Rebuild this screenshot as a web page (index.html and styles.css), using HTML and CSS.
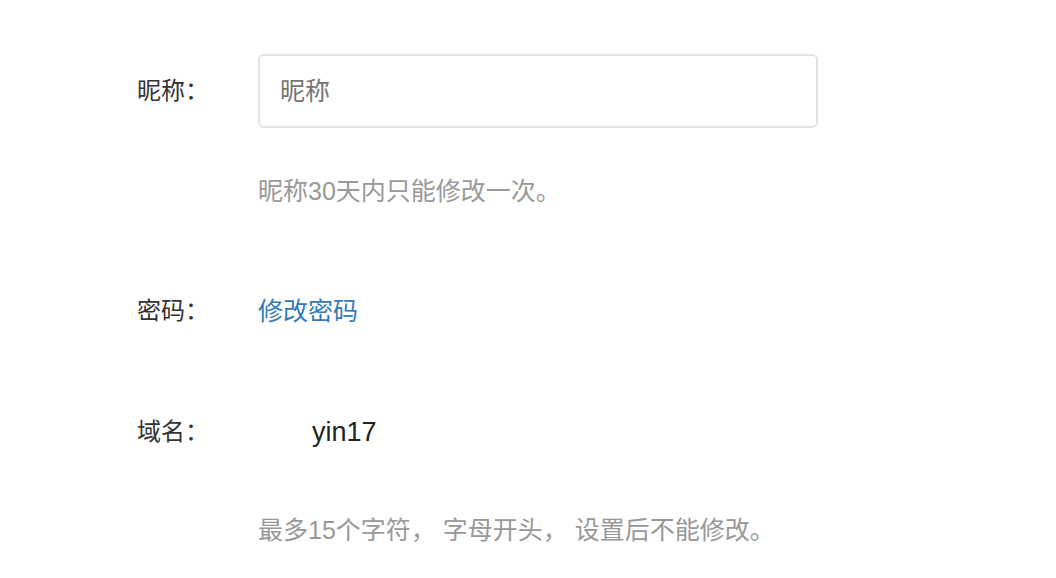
FILE: index.html
```html
<!DOCTYPE html>
<html lang="zh-CN">
<head>
<meta charset="utf-8">
<title>账号设置</title>
<link rel="stylesheet" href="styles.css">
</head>
<body>
<form class="settings">
  <div class="row row-input">
    <label class="label" for="nick">昵称：</label>
    <div class="field">
      <input id="nick" class="text-input" type="text" placeholder="昵称">
    </div>
  </div>
  <p class="help help-first">昵称30天内只能修改一次。</p>

  <div class="row row-pass">
    <span class="label">密码：</span>
    <div class="field"><a class="link" href="#">修改密码</a></div>
  </div>

  <div class="row row-domain">
    <span class="label">域名：</span>
    <div class="field"><span class="domain">yin17</span></div>
  </div>
  <p class="help help-last">最多15个字符， 字母开头， 设置后不能修改。</p>
</form>
</body>
</html>
```

FILE: styles.css
```css
html, body {
  margin: 0;
  padding: 0;
  background: #ffffff;
}

body {
  font-family: "Liberation Sans", "Noto Sans CJK SC", sans-serif;
  font-size: 25px;
  color: #333333;
}

.settings {
  padding: 54px 0 0 137px;
  width: 681px;
}

.row {
  display: flex;
  align-items: center;
  line-height: 36px;
}

.label {
  width: 121px;
  flex: none;
  font-size: 24px;
  color: #333333;
}

.field {
  flex: 1;
}

.text-input {
  box-sizing: border-box;
  width: 560px;
  height: 74px;
  border: 2px solid #e3e3e3;
  border-radius: 6px;
  padding: 0 20px;
  font-family: "Liberation Sans", "Noto Sans CJK SC", sans-serif;
  font-size: 25px;
  color: #333333;
  outline: none;
  display: block;
}

.text-input::placeholder {
  color: #757575;
}

.help {
  margin: 0 0 0 121px;
  line-height: 36px;
  color: #999999;
}

.help-first {
  margin-top: 45px;
}

.row-pass {
  margin-top: 84px;
}

.row-domain {
  margin-top: 85px;
}

.help-last {
  margin-top: 62px;
}

.link {
  color: #337ab7;
  text-decoration: none;
}

.domain {
  color: #222222;
  font-size: 27px;
  padding-left: 54px;
}
```
